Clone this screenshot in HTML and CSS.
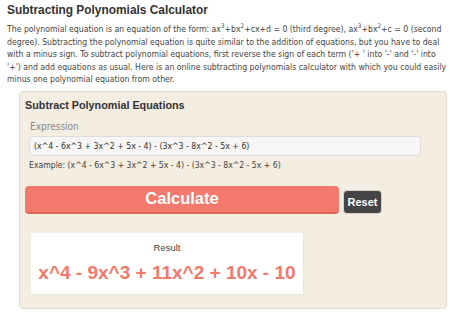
FILE: index.html
```html
<!DOCTYPE html>
<html lang="en">
<head>
  <meta charset="UTF-8" />
  <title>Subtracting Polynomials Calculator</title>
  <link rel="stylesheet" href="styles.css">
</head>
<body>
  <div class="page">
    <h1>Subtracting Polynomials Calculator</h1>
    <p class="intro">The polynomial equation is an equation of the form: ax<sup>3</sup>+bx<sup>2</sup>+cx+d = 0 (third degree), ax<sup>3</sup>+bx<sup>2</sup>+c = 0 (second degree). Subtracting the polynomial equation is quite similar to the addition of equations, but you have to deal with a minus sign. To subtract polynomial equations, first reverse the sign of each term ('+ ' into '-' and '-' into '+') and add equations as usual. Here is an online subtracting polynomials calculator with which you could easily minus one polynomial equation from other.</p>

    <div class="panel">
      <h2>Subtract Polynomial Equations</h2>
      <label class="label" for="expr">Expression</label>
      <input class="field" id="expr" type="text" value="(x^4 - 6x^3 + 3x^2 + 5x - 4) - (3x^3 - 8x^2 - 5x + 6)">
      <p class="example">Example: (x^4 - 6x^3 + 3x^2 + 5x - 4) - (3x^3 - 8x^2 - 5x + 6)</p>

      <div class="actions">
        <button class="calc">Calculate</button>
        <button class="reset">Reset</button>
      </div>

      <div class="result">
        <div class="result-title">Result</div>
        <div class="result-value">x^4 - 9x^3 + 11x^2 + 10x - 10</div>
      </div>
    </div>
  </div>
</body>
</html>
```

FILE: styles.css
```css
body {
  margin: 0;
  overflow: hidden;
  background: #ffffff;
  font-family: "DejaVu Sans Condensed", "DejaVu Sans", Tahoma, sans-serif;
  color: #333;
}

.page {
  width: 441px;
  padding: 2px 7px;
}

h1 {
  margin: 0;
  font-family: "Liberation Sans", Arial, sans-serif;
  font-size: 11.9px;
  font-weight: bold;
  color: #333;
  line-height: 17px;
}

.intro {
  margin: 4px 0 0;
  font-size: 8.65px;
  line-height: 12.5px;
  color: #444;
}

.intro sup {
  font-size: 6.3px;
  line-height: 0;
}

.panel {
  margin: 5px 0 0 12px;
  width: 416px;
  height: 200px;
  padding: 7px 5px 9px;
  background: #f3ede2;
  border: 1px solid #e3dccd;
  border-radius: 4px;
}

h2 {
  margin: 0;
  font-family: "Liberation Sans", Arial, sans-serif;
  font-size: 10.8px;
  font-weight: bold;
  color: #333;
  line-height: 13px;
}

.label {
  display: block;
  margin: 8px 0 0 5px;
  font-size: 10px;
  color: #888;
  line-height: 14px;
}

.field {
  display: block;
  box-sizing: border-box;
  margin: 2px 0 0 4px;
  width: 392px;
  height: 20px;
  padding: 0 4px;
  background: #f7f6f4;
  border: 1px solid #ddd;
  border-radius: 3px;
  font-family: "DejaVu Sans Condensed", "DejaVu Sans", Tahoma, sans-serif;
  font-size: 8.7px;
  color: #333;
}

.example {
  margin: 3px 0 0 4px;
  font-size: 8.6px;
  color: #444;
  line-height: 12px;
}

.actions {
  display: flex;
  align-items: flex-end;
  gap: 4px;
  margin-top: 15px;
}

.calc {
  width: 314px;
  height: 28px;
  padding: 0;
  background: #f2796b;
  border: none;
  border-bottom: 2px solid #e06656;
  border-radius: 4px;
  color: #fff;
  font-family: "Liberation Sans", Arial, sans-serif;
  font-size: 16.5px;
  font-weight: bold;
  cursor: pointer;
}

.reset {
  width: 39px;
  height: 24px;
  padding: 0;
  background: #454547;
  border: 1px solid #d8d2c5;
  border-radius: 4px;
  color: #fff;
  font-family: "Liberation Sans", Arial, sans-serif;
  font-size: 11px;
  font-weight: bold;
  cursor: pointer;
}

.result {
  margin: 19px 0 0 6px;
  width: 273px;
  height: 62px;
  box-sizing: border-box;
  padding-top: 9px;
  background: #fff;
  border-right: 1px solid #ebe6dc;
  border-bottom: 1px solid #ebe6dc;
  text-align: center;
}

.result-title {
  font-family: "Liberation Sans", Arial, sans-serif;
  font-size: 9.5px;
  color: #444;
  line-height: 12px;
}

.result-value {
  margin-top: 8px;
  font-family: "Liberation Sans", Arial, sans-serif;
  font-size: 19px;
  font-weight: bold;
  color: #f2796b;
  line-height: 22px;
}
```
